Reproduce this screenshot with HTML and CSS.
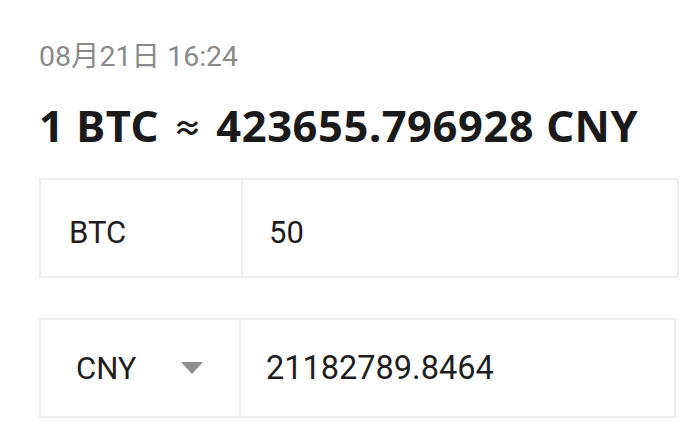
FILE: index.html
```html
<!DOCTYPE html>
<html lang="zh-CN">
<head>
<meta charset="utf-8">
<title>BTC CNY</title>
<link rel="stylesheet" href="styles.css">
</head>
<body>
<main class="page">
  <div class="date">08月21日 16:24</div>
  <h1 class="rate">1 BTC <span class="approx">≈</span> 423655.796928 CNY</h1>
  <div class="box box-from">
    <div class="cell cell-label">BTC</div>
    <div class="cell cell-value">50</div>
  </div>
  <div class="box box-to">
    <div class="cell cell-label cell-select">
      <span>CNY</span>
      <svg class="caret" width="22" height="12" viewBox="0 0 22 12"><polygon points="0,0 22,0 11,12" fill="#8c8c8c"/></svg>
    </div>
    <div class="cell cell-value">21182789.8464</div>
  </div>
</main>
</body>
</html>
```

FILE: styles.css
```css
html, body {
  margin: 0;
  padding: 0;
  background: #ffffff;
}

.page {
  padding: 39px 21px 0 39px;
  font-family: Roboto, "Noto Sans CJK SC", sans-serif;
}

.date {
  font-size: 28.5px;
  line-height: 36px;
  color: #8a8a8a;
  height: 36px;
}

.rate {
  margin: 20px 0 0 0;
  font-family: "Noto Sans", "Noto Sans CJK SC", sans-serif;
  font-weight: 700;
  font-size: 43.5px;
  line-height: 60px;
  height: 60px;
  color: #1a1a1a;
  white-space: nowrap;
  letter-spacing: 0.55px;
}

.approx {
  font-size: 29px;
  vertical-align: 3px;
  padding: 0 2px;
}

.box {
  display: flex;
  height: 96px;
  border: 2px solid #eeeeee;
  box-sizing: content-box;
}

.box-from {
  margin-top: 23px;
  width: 636px;
}

.box-to {
  margin-top: 40px;
  width: 633px;
}

.cell {
  display: flex;
  align-items: center;
  font-size: 31px;
  color: #1e1e1e;
}

.box-from .cell {
  padding-top: 9px;
  box-sizing: border-box;
}

.cell-label {
  border-right: 2px solid #eeeeee;
}

.box-from .cell-label {
  width: 202px;
  padding-left: 28px;
  box-sizing: border-box;
}

.box-from .cell-value {
  padding-left: 26px;
}

.cell-select {
  width: 200px;
  padding-left: 35px;
  box-sizing: border-box;
}

.caret {
  margin-left: 44px;
}

.box-to .cell-value {
  padding-left: 25px;
  font-size: 32.5px;
}
```
